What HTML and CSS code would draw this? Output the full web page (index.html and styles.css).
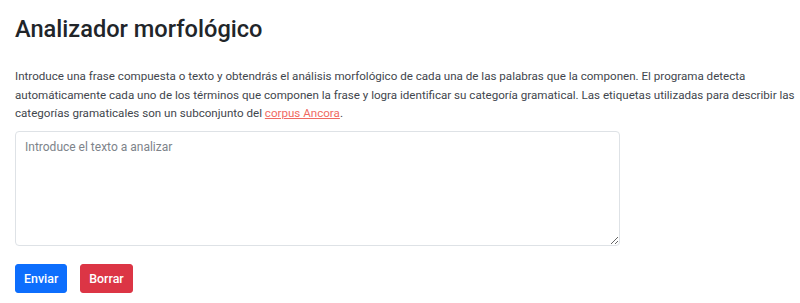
FILE: index.html
```html
<!DOCTYPE html>
<html lang="es">
<head>
    <meta charset="UTF-8">
    <meta name="viewport" content="width=device-width, initial-scale=1.0">
    <title>Analizador morfológico</title>
    <link rel="stylesheet" href="styles.css">
</head>
<body>
    <div class="container">
        <h1 class="title">Analizador morfológico</h1>

        <p class="intro">Introduce una frase compuesta o texto y obtendrás el análisis morfológico de cada una de las palabras que la componen. El programa detecta automáticamente cada uno de los términos que componen la frase y logra identificar su categoría gramatical. Las etiquetas utilizadas para describir las categorías gramaticales son un subconjunto del <a href="#" class="corpus-link">corpus Ancora</a>.</p>

        <form class="analyzer-form" onsubmit="return false;">
            <textarea class="text-area" placeholder="Introduce el texto a analizar"></textarea>
            <div class="actions">
                <button type="submit" class="btn btn-primary">Enviar</button>
                <button type="reset" class="btn btn-danger">Borrar</button>
            </div>
        </form>
    </div>
</body>
</html>
```

FILE: styles.css
```css
body {
    margin: 0;
    background-color: #fff;
    font-family: Roboto, "Liberation Sans", sans-serif;
    color: #212529;
}

.container {
    padding: 0 4px 0 15px;
}

.title {
    margin: 0;
    padding-top: 14px;
    font-size: 23.6px;
    font-weight: 500;
    line-height: 30px;
    color: #212529;
}

.intro {
    margin: 23px 0 0;
    font-size: 11.6px;
    line-height: 18.6px;
    color: #3f464d;
}

.corpus-link {
    color: #f06a62;
}

.analyzer-form {
    margin-top: 8px;
}

.text-area {
    display: block;
    width: 605px;
    height: 115px;
    box-sizing: border-box;
    padding: 6px 9px;
    border: 1px solid #dee2e6;
    border-radius: 4px;
    font-family: Roboto, "Liberation Sans", sans-serif;
    font-size: 12px;
    line-height: 18px;
    color: #495057;
}

.text-area::placeholder {
    color: #7d838a;
}

.actions {
    display: flex;
    gap: 13px;
    margin-top: 18px;
}

.btn {
    height: 29px;
    padding: 0 8px;
    border: 1px solid transparent;
    border-radius: 3px;
    font-family: Roboto, "Liberation Sans", sans-serif;
    font-size: 12.4px;
    font-weight: 500;
    color: #fff;
    cursor: pointer;
}

.btn-primary {
    background-color: #0d6efd;
    border-color: #0d6efd;
}

.btn-danger {
    background-color: #dc3545;
    border-color: #dc3545;
}
```
